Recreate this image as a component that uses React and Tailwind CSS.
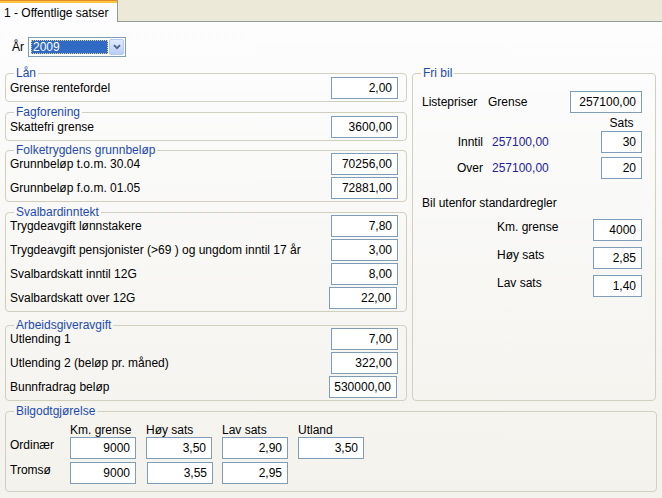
import React from "react";

const font = "font-['Liberation_Sans',Arial,sans-serif]";

function Field({ value, className = "w-[67px]" }) {
	return (
		<input
			readOnly
			value={value}
			className={`h-[22px] shrink-0 border border-[#7f9db9] bg-white text-right pr-[5px] text-[12px] text-black outline-none ${className}`}
		/>
	);
}

function Group({ title, children, className = "" }) {
	return (
		<fieldset className={`border border-[#d0d0bf] rounded-[4px] min-w-0 ${className}`}>
			<legend className="ml-[4px] px-[2px] leading-[14px] text-[#1c4bb0]">{title}</legend>
			{children}
		</fieldset>
	);
}

function Row({ label, value, fieldClass }) {
	return (
		<div className="flex items-center justify-between h-[22px]">
			<span>{label}</span>
			<Field value={value} className={fieldClass} />
		</div>
	);
}

function LeftGroup({ title, rows, className = "", pull = "-mt-[4px]" }) {
	return (
		<Group title={title} className={`pl-[4px] pr-[8px] ${className}`}>
			<div className={`${pull} pb-[2px] flex flex-col gap-[2px]`}>
				{rows.map((r) => (
					<Row key={r[0]} label={r[0]} value={r[1]} fieldClass={r[2]} />
				))}
			</div>
		</Group>
	);
}

function YearSelect() {
	return (
		<div className="flex items-center h-[20px] w-[98px] border border-[#7f9db9] bg-white">
			<div className="ml-[2px] w-[77px] h-[14px] bg-[#316ac5] border border-dotted border-[#ded08e] text-white leading-[12px] pl-[1px]">
				2009
			</div>
			<div className="ml-auto mr-[1px] w-[15px] h-[16px] rounded-[2px] border border-[#b5c8f0] bg-linear-to-b from-[#e1eafe] to-[#b9cdf7] flex items-center justify-center">
				<svg width="8" height="6" viewBox="0 0 8 6">
					<path d="M1 1.2 L4 4.2 L7 1.2" fill="none" stroke="#4d6185" strokeWidth="1.8" />
				</svg>
			</div>
		</div>
	);
}

function FriBil() {
	return (
		<Group title="Fri bil" className="pl-[4px] pr-[13px]">
			<div className="pl-[5px] flex flex-col">
				<div className="mt-[11px] h-[22px] flex items-center">
					<span className="w-[66px]">Listepriser</span>
					<span>Grense</span>
					<Field value="257100,00" className="w-[72px] ml-auto" />
				</div>
				<div className="mt-[3px] h-[14px] flex justify-end leading-[14px]">
					<span className="w-[41px] text-center">Sats</span>
				</div>
				{[
					["Inntil", "30", "mt-[1px]"],
					["Over", "20", "mt-[4px]"],
				].map(([l, v, m]) => (
					<div key={l} className={`${m} h-[22px] flex items-center`}>
						<span className="w-[61px] text-right">{l}</span>
						<span className="ml-[9px] text-[#22229a]">257100,00</span>
						<Field value={v} className="w-[41px] ml-auto" />
					</div>
				))}
				<div className="mt-[17px] leading-[14px]">Bil utenfor standardregler</div>
				{[
					["Km. grense", "4000", "mt-[9px]"],
					["Høy sats", "2,85", "mt-[6px]"],
					["Lav sats", "1,40", "mt-[6px]"],
				].map(([l, v, m]) => (
					<div key={l} className={`${m} h-[22px] flex items-start`}>
						<span className="ml-[75px] leading-[14px] pt-[1px]">{l}</span>
						<Field value={v} className="w-[49px] ml-auto" />
					</div>
				))}
			</div>
		</Group>
	);
}

function Bilgodtgjorelse() {
	const cols = ["Km. grense", "Høy sats", "Lav sats", "Utland"];
	return (
		<Group title="Bilgodtgjørelse" className="mt-[3px] px-[4px] pb-[7px]">
			<div className="mt-[5px] flex pl-[60px] leading-[14px]">
				{cols.map((c) => (
					<span key={c} className="w-[76px]">
						{c}
					</span>
				))}
			</div>
			<div className="flex items-start">
				<span className="w-[60px] pt-[1px] leading-[14px]">Ordinær</span>
				<Field value="9000" className="w-[66px]" />
				<Field value="3,50" className="w-[66px] ml-[10px]" />
				<Field value="2,90" className="w-[66px] ml-[10px]" />
				<Field value="3,50" className="w-[66px] ml-[10px]" />
			</div>
			<div className="mt-[3px] flex items-start">
				<span className="w-[60px] pt-[1px] leading-[14px]">Tromsø</span>
				<Field value="9000" className="w-[66px]" />
				<Field value="3,55" className="w-[66px] ml-[11px]" />
				<Field value="2,95" className="w-[66px] ml-[9px]" />
			</div>
		</Group>
	);
}

export default function App() {
	return (
		<div className={`w-[662px] h-[498px] overflow-hidden text-[12px] leading-[14px] text-black ${font}`}>
			<div className="flex h-[22px] bg-[#ece9d8]">
				<div className="w-[118px] flex flex-col border-r border-[#919b9c] bg-[#fcfcfe]">
					<div className="h-[1px] bg-[#e68b2c]" />
					<div className="h-[2px] bg-[#ffc73c]" />
					<div className="flex-1 flex items-center pl-[4px]">1 - Offentlige satser</div>
				</div>
				<div className="flex-1 border-b border-[#919b9c]" />
			</div>
			<div className="h-[476px] bg-linear-to-b from-[#fdfdfe] to-[#f3f2ec] px-[5px]">
				<div className="pt-[15px] pl-[7px] flex items-center">
					<span className="w-[16px]">År</span>
					<YearSelect />
				</div>
				<div className="mt-[9px] grid grid-cols-[402px_244px] gap-x-[5px]">
					<div className="flex flex-col">
						<LeftGroup title="Lån" pull="-mt-[3px]" rows={[["Grense rentefordel", "2,00"]]} />
						<LeftGroup
							title="Fagforening"
							pull="-mt-[3px]"
							className="mt-[3px]"
							rows={[["Skattefri grense", "3600,00"]]}
						/>
						<LeftGroup
							title="Folketrygdens grunnbeløp"
							className="mt-[2px]"
							rows={[
								["Grunnbeløp t.o.m. 30.04", "70256,00"],
								["Grunnbeløp f.o.m. 01.05", "72881,00"],
							]}
						/>
						<LeftGroup
							title="Svalbardinntekt"
							className="mt-[3px]"
							rows={[
								["Trygdeavgift lønnstakere", "7,80"],
								["Trygdeavgift pensjonister (>69 ) og ungdom inntil 17 år", "3,00"],
								["Svalbardskatt inntil 12G", "8,00"],
								["Svalbardskatt over 12G", "22,00", "w-[68px] mr-[1px]"],
							]}
						/>
						<LeftGroup
							title="Arbeidsgiveravgift"
							className="mt-[6px]"
							rows={[
								["Utlending 1", "7,00"],
								["Utlending 2 (beløp pr. måned)", "322,00"],
								["Bunnfradrag beløp", "530000,00", "w-[68px] mr-[1px]"],
							]}
						/>
					</div>
					<FriBil />
				</div>
				<Bilgodtgjorelse />
			</div>
		</div>
	);
}
